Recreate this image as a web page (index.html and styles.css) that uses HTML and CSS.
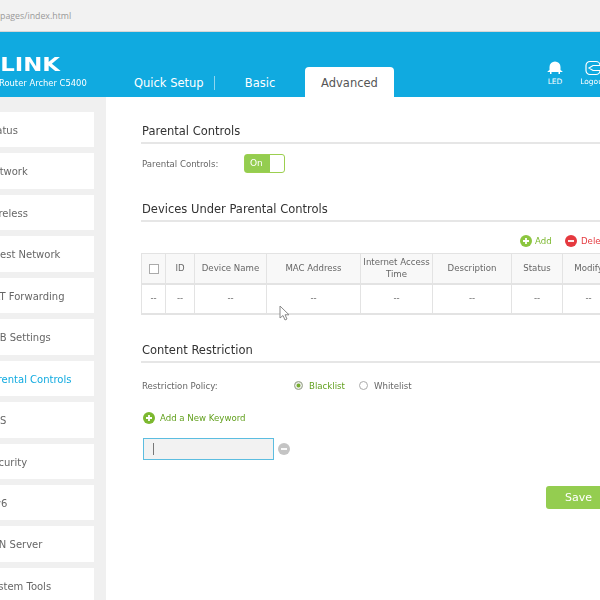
FILE: index.html
```html
<!DOCTYPE html>
<html lang="en">
<head>
<meta charset="utf-8">
<title>Parental Controls</title>
<link rel="stylesheet" href="styles.css">
</head>
<body>
<div class="screen">
  <div class="addressbar"><span class="url">pages/index.html</span></div>
  <header class="header">
    <div class="brand">
      <div class="logo">TP-LINK</div>
      <div class="model">Router Archer C5400</div>
    </div>
    <nav class="tabs">
      <a class="tab tab-quick">Quick Setup<span class="tab-rule"></span></a>
      <a class="tab tab-basic">Basic</a>
      <a class="tab tab-active">Advanced</a>
    </nav>
    <div class="tools">
      <div class="tool">
        <svg class="tool-icon" viewBox="0 0 16 16"><path d="M2.500 10V7a5.500 5.500 0 0 1 11 0v3l2 1.500v.5H13v2h-1.500v-2h-7v2H3v-2H.5v-.5z" fill="#fff"/></svg>
        <span>LED</span>
      </div>
      <div class="tool tool-logout">
        <svg class="tool-icon" viewBox="0 0 16 16" fill="none" stroke="#fff" stroke-width="1.200"><rect x="1" y="1.500" width="14" height="13" rx="4"/><path d="M16 5.500H8L4 8l4 2.500h8" fill="#10aae0"/></svg>
        <span>Logout</span>
      </div>
    </div>
  </header>
  <div class="body">
    <aside class="sidebar">
      <a class="side-item">Status</a>
      <a class="side-item">Network</a>
      <a class="side-item">Wireless</a>
      <a class="side-item">Guest Network</a>
      <a class="side-item">NAT Forwarding</a>
      <a class="side-item">USB Settings</a>
      <a class="side-item side-active">Parental Controls</a>
      <a class="side-item">QoS</a>
      <a class="side-item">Security</a>
      <a class="side-item">IPv6</a>
      <a class="side-item">VPN Server</a>
      <a class="side-item">System Tools</a>
    </aside>
    <main class="content">
      <section class="sec sec-first">
        <h2 class="sec-title">Parental Controls</h2>
        <div class="toggle-row">
          <span class="label">Parental Controls:</span>
          <div class="toggle"><span class="toggle-on">On</span><span class="toggle-knob"></span></div>
        </div>
      </section>
      <section class="sec sec-devices">
        <h2 class="sec-title">Devices Under Parental Controls</h2>
        <div class="actions">
          <a class="action action-add">
            <svg class="round-icon" viewBox="0 0 12 12"><circle cx="6" cy="6" r="6" fill="#8cc63f"/><path d="M6 3v6M3 6h6" stroke="#fff" stroke-width="1.800"/></svg>Add</a>
          <a class="action action-del">
            <svg class="round-icon" viewBox="0 0 12 12"><circle cx="6" cy="6" r="6" fill="#e5393f"/><path d="M3 6h6" stroke="#fff" stroke-width="1.800"/></svg>Delete</a>
        </div>
        <table class="grid">
          <colgroup>
            <col class="c1"><col class="c2"><col class="c3"><col class="c4"><col class="c5"><col class="c6"><col class="c7"><col class="c8">
          </colgroup>
          <thead>
            <tr>
              <th><span class="check"></span></th>
              <th>ID</th><th>Device Name</th><th>MAC Address</th><th>Internet Access Time</th><th>Description</th><th>Status</th><th>Modify</th>
            </tr>
          </thead>
          <tbody>
            <tr><td>--</td><td>--</td><td>--</td><td>--</td><td>--</td><td>--</td><td>--</td><td>--</td></tr>
          </tbody>
        </table>
      </section>
      <section class="sec sec-content">
        <h2 class="sec-title">Content Restriction</h2>
        <div class="policy-row">
          <span class="label policy-label">Restriction Policy:</span>
          <span class="radio radio-on"></span><span class="radio-text radio-text-on">Blacklist</span>
          <span class="radio"></span><span class="radio-text">Whitelist</span>
        </div>
        <a class="keyword-add">
          <svg class="round-icon" viewBox="0 0 12 12"><circle cx="6" cy="6" r="6" fill="#7cb82f"/><path d="M6 3v6M3 6h6" stroke="#fff" stroke-width="1.800"/></svg>Add a New Keyword</a>
        <div class="keyword-row">
          <div class="keyword-input"><span class="caret"></span></div>
          <svg class="round-icon" viewBox="0 0 12 12"><circle cx="6" cy="6" r="6" fill="#c4c4c4"/><path d="M3 6h6" stroke="#fff" stroke-width="1.800"/></svg>
        </div>
        <div class="save-row"><button class="save">Save</button></div>
      </section>
    </main>
  </div>
  <svg class="pointer" viewBox="0 0 11 16"><path d="M1 1v12l3-2.500 2 4.500 2-1-2-4.200h4z" fill="#fff" stroke="#888" stroke-width="1"/></svg>
</div>
</body>
</html>
```

FILE: styles.css
```css
* { box-sizing: border-box; }
html, body { margin: 0; padding: 0; }
body { font-family: "DejaVu Sans", Verdana, sans-serif; color: #555; background: #fff; }
.screen { position: relative; width: 600px; height: 600px; overflow: hidden; filter: blur(.3px); }

.addressbar { height: 32px; background: #f2f2f2; border-bottom: 1px solid #d6d6d6; padding: 10px 0 0 0; font-family: "Open Sans", sans-serif; font-size: 8.800px; line-height: 12px; color: #999; white-space: nowrap; }

.header { height: 65px; background: #10aae0; display: flex; align-items: flex-end; width: 700px; }
.brand { flex: none; width: 134px; height: 65px; padding-top: 24px; white-space: nowrap; position: relative; }
.logo { font-weight: 700; font-size: 19px; line-height: 16px; color: #fff; width: 60px; margin-left: 0; direction: rtl; transform: scaleX(1.200); transform-origin: right center; }
.model { font-size: 8.400px; line-height: 12px; color: #fff; margin-top: 5px; margin-left: -1px; }
.tabs { display: flex; align-items: flex-end; color: #fff; font-size: 11.500px; flex: none; }
.tab { display: flex; align-items: center; height: 30px; padding-top: 1px; }
.tab-quick { width: 81px; gap: 10px; white-space: nowrap; }
.tab-rule { width: 1px; height: 14px; background: #8fd6ef; flex: none; }
.tab-basic { width: 90px; justify-content: center; }
.tab-active { width: 89px; background: #fff; color: #555; justify-content: center; border-radius: 4px 4px 0 0; }
.tools { display: flex; margin-left: 146px; padding-bottom: 11px; color: #fff; font-size: 7.500px; flex: none; }
.tool { display: flex; flex-direction: column; align-items: center; width: 30px; }
.tool-logout { margin-left: 8px; }
.tool-icon { width: 16px; height: 16px; display: block; margin-bottom: 1px; }

.body { display: flex; height: 503px; width: 700px; }
.sidebar { flex: none; width: 106px; background: #f0f0f0; padding-top: 15px; display: flex; flex-direction: column; gap: 6px; overflow: hidden; }
.side-item { flex: none; display: block; width: 94px; height: 35.450px; line-height: 37px; background: #fff; font-size: 10px; color: #666; white-space: nowrap; text-indent: -14px; }
.side-active { color: #10aae0; }

.content { flex: none; width: 594px; padding-left: 36px; }
.sec-title { margin: 0; font-size: 11.500px; font-weight: 400; color: #333; height: 24px; line-height: 22px; border-bottom: 2px solid #e6e6e6; margin-left: -1px; padding-left: 1px; }
.label { font-size: 8.600px; color: #666; }
.sec-first { padding-top: 23px; }
.toggle-row { display: flex; align-items: center; margin-top: 10px; }
.toggle-row .label { width: 102px; }
.toggle { width: 41px; height: 19px; border: 1px solid #9ccf4f; border-radius: 3px; display: flex; background: #fff; }
.toggle-on { width: 25px; background: #94cd50; color: #fff; font-size: 9px; line-height: 17px; padding-left: 5px; }
.toggle-knob { flex: 1; }

.sec-devices { margin-top: 25px; }
.actions { display: flex; padding-left: 378px; margin-top: 8px; height: 21px; align-items: center; font-size: 8.600px; white-space: nowrap; }
.action { display: flex; align-items: center; gap: 3px; }
.action-add { color: #7cb82f; width: 45px; }
.action-del { color: #e5393f; gap: 4px; }
.round-icon { width: 12px; height: 12px; flex: none; display: block; }

.grid { border-collapse: collapse; table-layout: fixed; width: 473px; margin-left: -1px; margin-top: 2px; font-size: 8.600px; color: #666; }
.c1 { width: 24px; } .c2 { width: 29px; } .c3 { width: 72px; } .c4 { width: 94px; } .c5 { width: 72px; } .c6 { width: 79px; } .c7 { width: 51px; } .c8 { width: 52px; }
.grid th, .grid td { border: 1px solid #e3e3e3; text-align: center; font-weight: 400; padding: 0; line-height: 11.500px; }
.grid th { background: #f8f8f8; height: 30px; border-bottom-width: 2px; padding-top: 1px; }
.grid td { height: 30px; border-bottom-width: 2px; }
.check { display: inline-block; width: 10px; height: 10px; border: 1px solid #aaa; background: #fff; vertical-align: middle; }

.sec-content { margin-top: 24px; }
.policy-row { display: flex; align-items: center; margin-top: 16px; height: 14px; font-size: 8.600px; }
.policy-label { width: 152px; }
.radio { width: 9px; height: 9px; border-radius: 50%; border: 1px solid #aaa; background: #fff; flex: none; }
.radio-on { border-color: #aaa; background: #76ad2e; box-shadow: inset 0 0 0 1.500px #eee; }
.radio-text { margin-left: 6px; width: 50px; color: #666; }
.radio-text-on { color: #62a01e; }
.keyword-add { display: flex; align-items: center; gap: 5px; margin-top: 18px; margin-left: 1px; font-size: 8.600px; color: #62a01e; height: 14px; }
.keyword-row { display: flex; align-items: center; gap: 4px; margin-top: 13px; margin-left: 1px; }
.keyword-input { width: 131px; height: 22px; border: 1px solid #5cbde0; background: #f2f2f2; padding: 4px 0 0 9px; }
.caret { display: block; width: 1px; height: 12px; background: #777; }
.save-row { padding-left: 404px; margin-top: 26px; }
.save { display: block; width: 90px; height: 23px; border: 0; border-radius: 3px; background: #94cd50; color: #fff; font: 11px "DejaVu Sans", Verdana, sans-serif; text-align: left; padding-left: 19px; }

.pointer { position: absolute; left: 279px; top: 305px; width: 11px; height: 16px; }
```
